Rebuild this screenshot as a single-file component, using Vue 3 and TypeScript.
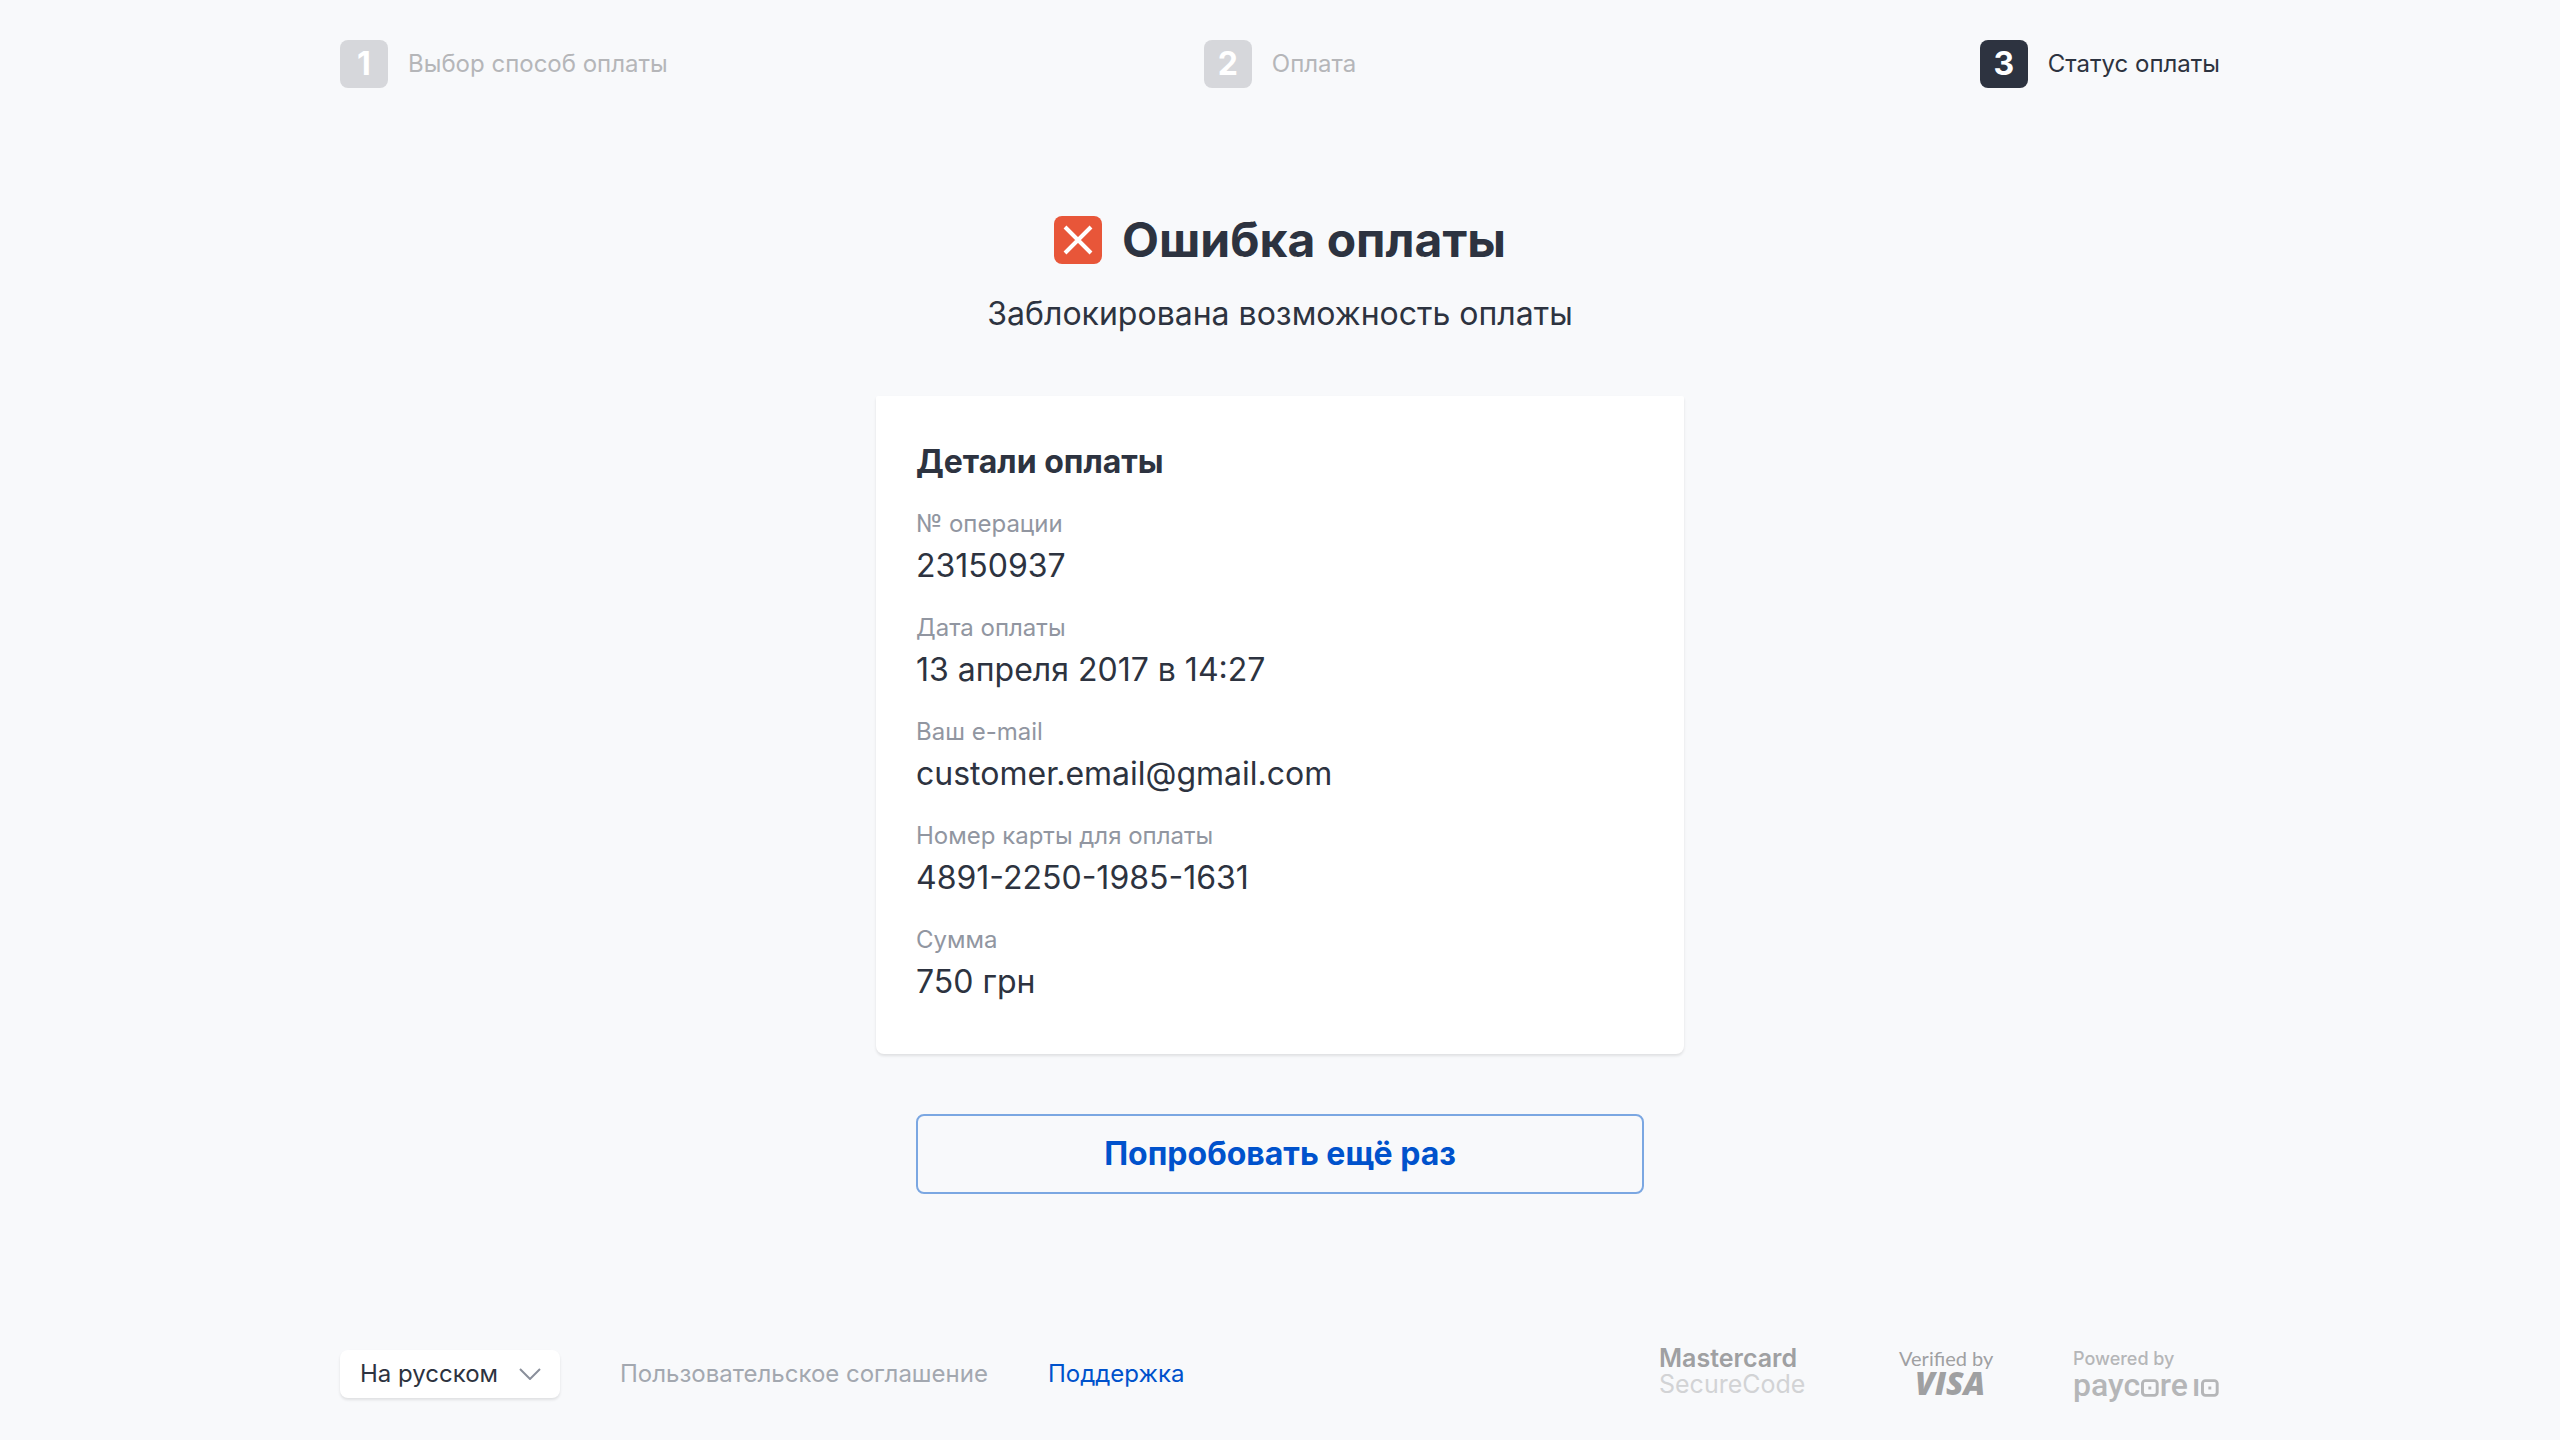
<script setup lang="ts">
import { ref } from 'vue'

interface Step {
  title: string
  active: boolean
}

interface Detail {
  label: string
  value: string
}

const steps: Step[] = [
  { title: 'Выбор способ оплаты', active: false },
  { title: 'Оплата', active: false },
  { title: 'Статус оплаты', active: true },
]

const details: Detail[] = [
  { label: '№ операции', value: '23150937' },
  { label: 'Дата оплаты', value: '13 апреля 2017 в 14:27' },
  { label: 'Ваш e-mail', value: 'customer.email@gmail.com' },
  { label: 'Номер карты для оплаты', value: '4891-2250-1985-1631' },
  { label: 'Сумма', value: '750 грн' },
]

const language = ref('ru')
</script>

<template>
  <div class="page">
    <ol class="steps">
      <li v-for="(step, i) in steps" :key="step.title" class="step" :class="{ active: step.active }">
        <span class="step-number">{{ i + 1 }}</span>
        <span class="step-title">{{ step.title }}</span>
      </li>
    </ol>

    <main class="main">
      <h1 class="heading">
        <svg class="error-icon" viewBox="0 0 48 48" aria-hidden="true">
          <rect width="48" height="48" rx="8" fill="#e85639" />
          <path d="M11 11 37 37M37 11 11 37" fill="none" stroke="#fff" stroke-width="4" />
        </svg>
        <span>Ошибка оплаты</span>
      </h1>
      <p class="subtitle">Заблокирована возможность оплаты</p>

      <section class="card">
        <h2 class="card-title">Детали оплаты</h2>
        <dl class="details">
          <div v-for="item in details" :key="item.label" class="detail">
            <dt>{{ item.label }}</dt>
            <dd>{{ item.value }}</dd>
          </div>
        </dl>
      </section>

      <button type="button" class="retry">Попробовать ещё раз</button>
    </main>

    <footer class="footer">
      <div class="language">
        <select v-model="language" aria-label="Язык">
          <option value="ru">На русском</option>
        </select>
        <svg class="chevron" viewBox="0 0 22 12" aria-hidden="true">
          <path d="M1 1 11 11 21 1" fill="none" stroke="#8a8f9b" stroke-width="2" />
        </svg>
      </div>
      <a class="link muted" href="#">Пользовательское соглашение</a>
      <a class="link" href="#">Поддержка</a>

      <div class="logos">
        <div class="mastercard">
          <span class="mc-name">Mastercard</span>
          <span class="mc-product">SecureCode</span>
        </div>
        <div class="visa">
          <span class="visa-verified">Verified by</span>
          <span class="visa-name">VISA</span>
        </div>
        <div class="paycore">
          <span class="pc-powered">Powered by</span>
          <span class="pc-name">
            <span>payc</span>
            <svg viewBox="0 0 18 18" aria-hidden="true">
              <rect x="1.5" y="1.5" width="15" height="15" rx="3" fill="none" stroke="currentColor" stroke-width="3" />
              <rect x="7.5" y="7.5" width="3" height="3" fill="currentColor" />
            </svg>
            <span>re</span>
            <span class="pc-i">ı</span>
            <svg viewBox="0 0 18 18" aria-hidden="true">
              <rect x="1.5" y="1.5" width="15" height="15" rx="3" fill="none" stroke="currentColor" stroke-width="3" />
              <rect x="7.5" y="7.5" width="3" height="3" fill="currentColor" />
            </svg>
          </span>
        </div>
      </div>
    </footer>
  </div>
</template>

<style>
body {
  margin: 0;
  background: #f8f9fb;
}
</style>

<style scoped>
.page {
  box-sizing: border-box;
  display: flex;
  flex-direction: column;
  min-height: 100vh;
  max-width: 1960px;
  margin: 0 auto;
  padding: 40px;
  color: #2d3340;
  font-family: Inter, "Liberation Sans", sans-serif;
  font-size: 24px;
  line-height: 32px;
}

.steps {
  display: grid;
  grid-template-columns: 1fr auto 1fr;
  margin: 0;
  padding: 0;
  list-style: none;
}

.step {
  display: flex;
  align-items: center;
  gap: 20px;
  color: #b5b6b9;
}

.step:last-child {
  justify-self: end;
}

.step-number {
  width: 48px;
  border-radius: 8px;
  background: #d6d7db;
  color: #fff;
  font-size: 32px;
  font-weight: 700;
  line-height: 48px;
  text-align: center;
}

.step.active {
  color: #2d3340;
}

.step.active .step-number {
  background: #2d3340;
}

.main {
  display: flex;
  flex-direction: column;
  align-items: center;
  margin-top: 120px;
}

.heading {
  display: flex;
  align-items: center;
  gap: 20px;
  margin: 0;
  font-size: 48px;
  font-weight: 700;
  line-height: 64px;
}

.error-icon {
  width: 48px;
  height: 48px;
}

.subtitle {
  margin: 22px 0 0;
  font-size: 32px;
  line-height: 40px;
}

.card {
  box-sizing: border-box;
  width: 100%;
  max-width: 808px;
  margin-top: 62px;
  padding: 46px 40px 52px;
  border-radius: 2px 2px 8px 8px;
  background: #fff;
  box-shadow: 0 2px 3px rgba(0, 0, 0, 0.1);
}

.card-title {
  margin: 0;
  font-size: 32px;
  font-weight: 700;
  line-height: 40px;
}

.details {
  display: flex;
  flex-direction: column;
  gap: 26px;
  margin: 26px 0 0;
}

.detail dt {
  color: #9196a1;
  line-height: 32px;
}

.detail dd {
  margin: 0;
  padding-top: 6px;
  font-size: 32px;
  line-height: 40px;
}

.retry {
  width: 100%;
  max-width: 728px;
  height: 80px;
  margin-top: 60px;
  border: 2px solid #7ba7e2;
  border-radius: 8px;
  background: transparent;
  color: #0052cc;
  font: 700 32px/40px Inter, "Liberation Sans", sans-serif;
  cursor: pointer;
}

.footer {
  display: flex;
  align-items: center;
  gap: 60px;
  height: 52px;
  margin-top: auto;
}

.language {
  display: grid;
  align-items: center;
  width: 220px;
}

.language select {
  grid-area: 1 / 1;
  width: 100%;
  height: 48px;
  padding: 0 20px;
  border: 0;
  border-radius: 8px;
  appearance: none;
  background: #fff;
  box-shadow: 0 2px 3px rgba(0, 0, 0, 0.1);
  color: inherit;
  font: inherit;
}

.chevron {
  grid-area: 1 / 1;
  justify-self: end;
  width: 22px;
  height: 12px;
  margin-right: 19px;
  pointer-events: none;
}

.link {
  color: #0052cc;
  text-decoration: none;
}

.link.muted {
  color: #a3a8b0;
}

.logos {
  display: flex;
  align-items: center;
  margin-left: auto;
  color: #9fa0a2;
}

.mastercard,
.visa,
.paycore {
  display: flex;
  flex-direction: column;
}

.mastercard {
  width: 240px;
  padding-bottom: 6px;
  font-size: 25px;
  line-height: 26px;
}

.mc-name {
  font-weight: 600;
}

.mc-product {
  color: #d2d3d5;
}

.visa {
  width: 174px;
  padding-bottom: 6px;
}

.visa-verified {
  font-family: Lato, sans-serif;
  font-size: 20px;
  line-height: 24px;
}

.visa-name {
  padding-left: 16px;
  font-family: "Open Sans", sans-serif;
  font-size: 32px;
  font-style: italic;
  font-weight: 800;
  line-height: 26px;
}

.paycore {
  width: 147px;
  padding-bottom: 2px;
  color: #b5b6b8;
}

.pc-powered {
  font-size: 18px;
  font-weight: 500;
  line-height: 24px;
}

.pc-name {
  display: flex;
  align-items: center;
  font-family: Roboto, sans-serif;
  font-size: 32px;
  font-weight: 500;
  line-height: 28px;
}

.pc-name svg {
  width: 18px;
  height: 18px;
  margin: 5px 1px 0;
}

.pc-i {
  margin-left: 4px;
}
</style>
